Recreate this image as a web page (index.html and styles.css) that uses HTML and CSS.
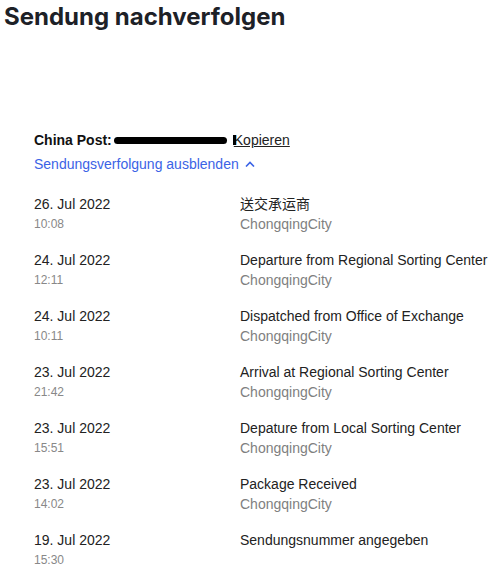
FILE: index.html
```html
<!DOCTYPE html>
<html lang="de">
<head>
  <meta charset="UTF-8" />
  <title>Sendung nachverfolgen</title>
  <link rel="stylesheet" href="styles.css">
</head>
<body>
  <h1 class="title">Sendung nachverfolgen</h1>

  <div class="shipment">
    <div class="carrier">
      <span class="carrier-name">China Post:</span>
      <span class="redacted"></span>
      <a class="copy" href="#"><span class="mark"></span>Kopieren</a>
    </div>
    <a class="toggle" href="#">Sendungsverfolgung ausblenden
      <svg width="10" height="6" viewBox="0 0 10 6"><path d="M1 5.5 L5 1.5 L9 5.5" fill="none" stroke="currentColor" stroke-width="1.6"/></svg>
    </a>

    <ul class="events">
      <li class="event">
        <div class="when"><div class="date">26. Jul 2022</div><div class="time">10:08</div></div>
        <div class="what"><div class="status">送交承运商</div><div class="place">ChongqingCity</div></div>
      </li>
      <li class="event">
        <div class="when"><div class="date">24. Jul 2022</div><div class="time">12:11</div></div>
        <div class="what"><div class="status">Departure from Regional Sorting Center</div><div class="place">ChongqingCity</div></div>
      </li>
      <li class="event">
        <div class="when"><div class="date">24. Jul 2022</div><div class="time">10:11</div></div>
        <div class="what"><div class="status">Dispatched from Office of Exchange</div><div class="place">ChongqingCity</div></div>
      </li>
      <li class="event">
        <div class="when"><div class="date">23. Jul 2022</div><div class="time">21:42</div></div>
        <div class="what"><div class="status">Arrival at Regional Sorting Center</div><div class="place">ChongqingCity</div></div>
      </li>
      <li class="event">
        <div class="when"><div class="date">23. Jul 2022</div><div class="time">15:51</div></div>
        <div class="what"><div class="status">Depature from Local Sorting Center</div><div class="place">ChongqingCity</div></div>
      </li>
      <li class="event">
        <div class="when"><div class="date">23. Jul 2022</div><div class="time">14:02</div></div>
        <div class="what"><div class="status">Package Received</div><div class="place">ChongqingCity</div></div>
      </li>
      <li class="event">
        <div class="when"><div class="date">19. Jul 2022</div><div class="time">15:30</div></div>
        <div class="what"><div class="status">Sendungsnummer angegeben</div></div>
      </li>
    </ul>
  </div>
</body>
</html>
```

FILE: styles.css
```css
body {
  margin: 0;
  background: #fff;
  font-family: "Liberation Sans", Arial, "Noto Sans CJK SC", sans-serif;
  color: #222;
}

.title {
  margin: 0;
  padding: 2px 0 0 4px;
  font-family: Inter, "Liberation Sans", sans-serif;
  font-size: 24px;
  font-weight: 700;
  line-height: 30px;
  color: #1d2127;
}

.shipment {
  padding: 98px 0 0 34px;
}

.carrier {
  display: flex;
  align-items: center;
  height: 20px;
  font-size: 14px;
}

.carrier-name {
  font-weight: 700;
  color: #111;
}

.redacted {
  width: 113px;
  height: 7px;
  margin-left: 2px;
  border-radius: 4px;
  background: #000;
}

.copy {
  position: relative;
  margin-left: 7px;
  color: #222;
  text-decoration: underline;
}

.mark {
  position: absolute;
  left: -1px;
  top: 3px;
  width: 3px;
  height: 10px;
  background: #000;
}

.toggle {
  display: flex;
  align-items: center;
  gap: 6px;
  height: 20px;
  margin-top: 4px;
  font-size: 14px;
  color: #3b63e6;
  text-decoration: none;
}

.events {
  list-style: none;
  margin: 20px 0 0;
  padding: 0;
}

.event {
  display: flex;
  height: 56px;
}

.when {
  width: 206px;
}

.date,
.status {
  font-size: 14px;
  line-height: 20px;
  color: #222;
}

.time {
  font-size: 12px;
  line-height: 20px;
  color: #888;
}

.place {
  font-size: 14px;
  line-height: 20px;
  color: #808080;
}
```
